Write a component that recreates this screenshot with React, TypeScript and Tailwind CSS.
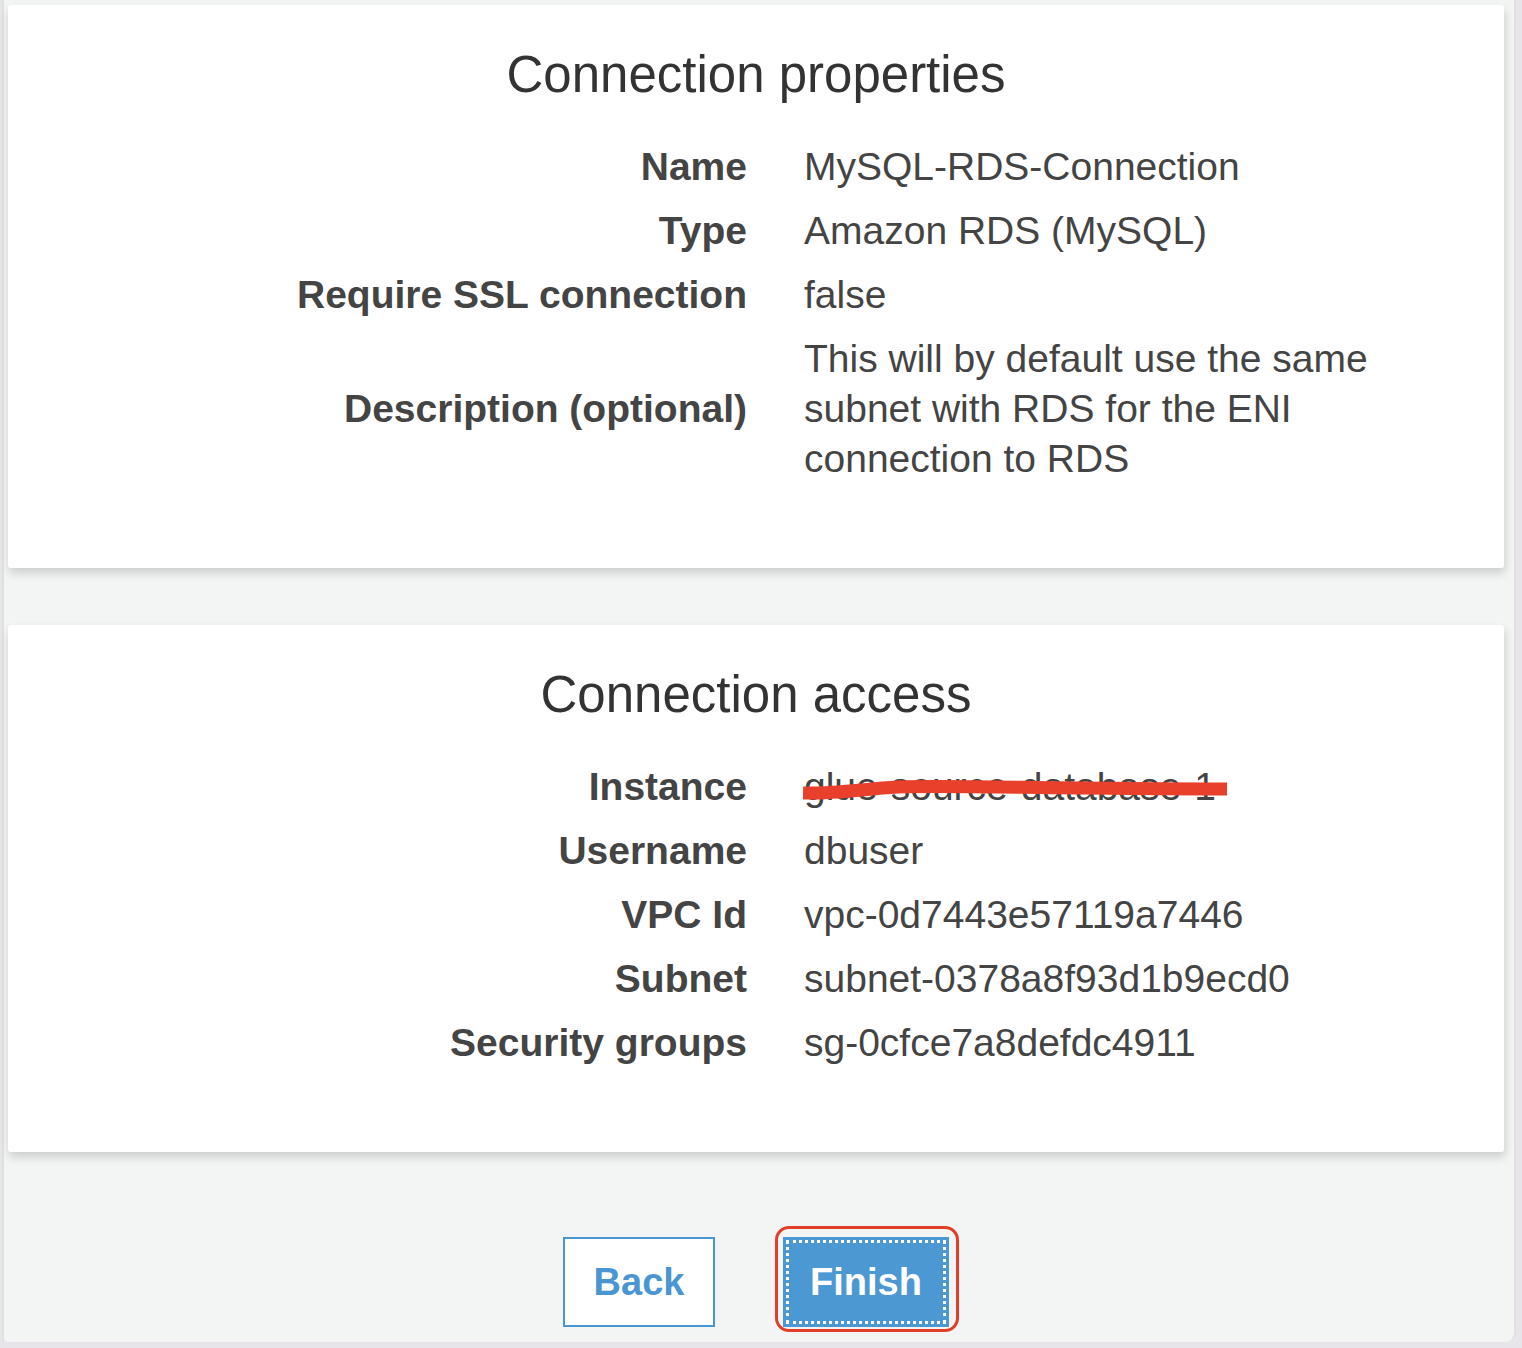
import React from "react"

const font = { fontFamily: '"Liberation Sans", Arial, Helvetica, sans-serif' }

type Row = { label: string; value: React.ReactNode }

function Card({ title, rows }: { title: string; rows: Row[] }) {
  return (
    <div className="w-[1496px] bg-white rounded-[3px] shadow-[1px_5px_10px_rgba(0,0,0,0.16)] pt-[40px] pb-[77px]">
      <h2 className="text-center text-[51px] leading-[60px] text-[#333]">{title}</h2>
      <div className="mt-[30px] grid grid-cols-[739px_600px] gap-x-[57px] items-center">
        {rows.map((r) => (
          <React.Fragment key={r.label}>
            <div className="text-right font-bold text-[39px] leading-[50px] py-[7px] text-[#444]">{r.label}</div>
            <div className="text-[39px] leading-[50px] py-[7px] text-[#444]">{r.value}</div>
          </React.Fragment>
        ))}
      </div>
    </div>
  )
}

function Redacted({ text }: { text: string }) {
  return (
    <span className="relative inline-block">
      {text}
      <svg className="absolute left-[-1px] top-[17px]" width="428" height="24" viewBox="0 0 428 24">
        <path d="M0 14 C 30 15, 60 10, 95 8 C 150 6, 250 10, 424 10" stroke="#e8402a" strokeWidth="13" fill="none" />
      </svg>
    </span>
  )
}

export default function App() {
  return (
    <div style={font} className="w-[1522px] h-[1348px] bg-[#e7e5ea] overflow-hidden">
      <div className="ml-[2px] w-[1514px] h-[1342px] bg-[#f3f5f4] border-l-2 border-r-2 border-[#e0e2e1] rounded-br-[10px] rounded-bl-[4px] pt-[5px] pl-[4px] flex flex-col">
        <Card
          title="Connection properties"
          rows={[
            { label: "Name", value: "MySQL-RDS-Connection" },
            { label: "Type", value: "Amazon RDS (MySQL)" },
            { label: "Require SSL connection", value: "false" },
            {
              label: "Description (optional)",
              value: "This will by default use the same subnet with RDS for the ENI connection to RDS",
            },
          ]}
        />
        <div className="mt-[57px]">
          <Card
            title="Connection access"
            rows={[
              { label: "Instance", value: <Redacted text="glue-source-database-1" /> },
              { label: "Username", value: "dbuser" },
              { label: "VPC Id", value: "vpc-0d7443e57119a7446" },
              { label: "Subnet", value: "subnet-0378a8f93d1b9ecd0" },
              { label: "Security groups", value: "sg-0cfce7a8defdc4911" },
            ]}
          />
        </div>
        <div className="w-[1496px] flex justify-center items-start gap-[60px] mt-[74px] pl-[10px]">
          <button className="mt-[11px] w-[152px] h-[90px] bg-white border-2 border-[#4a96d2] text-[#4a96d2] font-bold text-[38px]">
            Back
          </button>
          <div className="pt-[8px] pb-[2px] pl-[5px] pr-[7px] border-[3px] border-[#e0402a] rounded-[14px]">
            <button className="relative w-[166px] h-[90px] bg-[#4b98d3] text-white font-bold text-[38px]">
              <span className="absolute inset-[3px] border-[3px] border-dotted border-white" />
              <span className="relative">Finish</span>
            </button>
          </div>
        </div>
      </div>
    </div>
  )
}
